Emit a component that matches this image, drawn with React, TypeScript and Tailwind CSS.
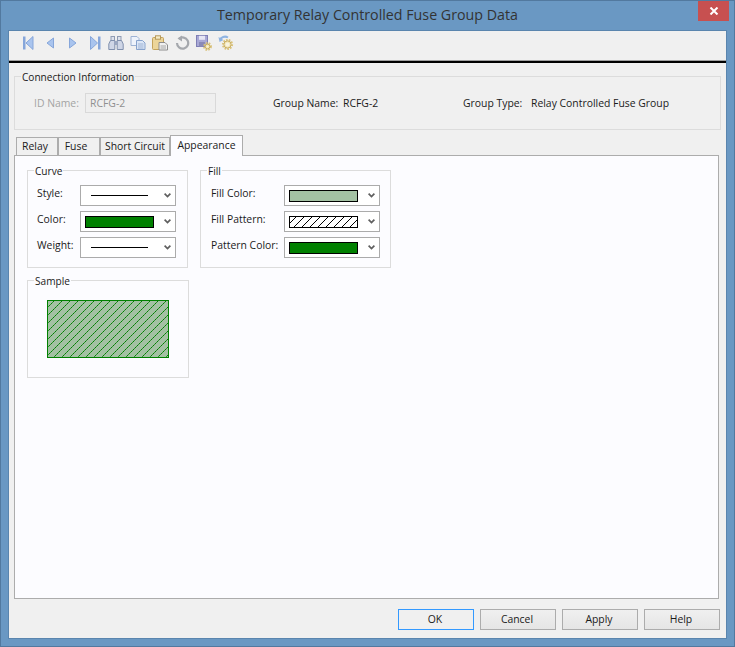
import React from "react";

const FONT = "font-['Open_Sans','Noto_Sans',sans-serif]";
const DIAG = [0, 1, 2, 3, 4, 5, 6, 7];

function Group({ title, className, children }: { title: string; className: string; children?: React.ReactNode }) {
  return (
    <div className={`relative border border-[#dcdcdc] ${className}`}>
      <span className="absolute left-[6px] top-[-7px] bg-inherit px-[1px] text-[10.1px] leading-[15px] text-[#1a1a1a]">{title}</span>
      {children}
    </div>
  );
}

function Chevron() {
  return (
    <svg width="7" height="5" viewBox="0 0 7 5" className="absolute right-[4px] top-[7px]">
      <path d="M0.6 0.6 L3.5 3.6 L6.4 0.6" fill="none" stroke="#5f5f5f" strokeWidth="1.7" />
    </svg>
  );
}

function HatchPattern({ id, bg, fg, soft }: { id: string; bg: string; fg: string; soft: string }) {
  return (
    <pattern id={id} width="8" height="8" patternUnits="userSpaceOnUse">
      <rect width="8" height="8" fill={bg} />
      {DIAG.map((i) => (
        <rect key={i} x={i} y={7 - i} width="1" height="1" fill={i % 2 === 0 ? fg : soft} />
      ))}
    </pattern>
  );
}

function HatchSwatch() {
  return (
    <svg width="69" height="12" viewBox="0 0 69 12" className="block" shapeRendering="crispEdges">
      <defs>
        <HatchPattern id="swatchHatch" bg="#ffffff" fg="#000000" soft="#000000" />
      </defs>
      <rect x="0.5" y="0.5" width="68" height="11" fill="url(#swatchHatch)" stroke="#000" />
    </svg>
  );
}

function Combo({ kind, color }: { kind: "line" | "swatch" | "hatch"; color?: string }) {
  return (
    <div className="relative flex h-[21px] w-[96px] items-center border border-[#ababab] bg-white pl-[4px]">
      {kind === "line" && <div className="ml-[6px] h-px w-[57px] bg-black" />}
      {kind === "swatch" && <div className="h-[12px] w-[69px] border border-black" style={{ backgroundColor: color }} />}
      {kind === "hatch" && <HatchSwatch />}
      <Chevron />
    </div>
  );
}

function Row({ label, labelW, children }: { label: string; labelW: string; children: React.ReactNode }) {
  return (
    <div className="flex items-start">
      <span className={`${labelW} pt-[1px] text-[10.4px] leading-[15px] text-[#1a1a1a]`}>{label}</span>
      {children}
    </div>
  );
}

function Tab({ label, active, w, extra = "" }: { label: string; active?: boolean; w: string; extra?: string }) {
  return active ? (
    <div className={`relative z-10 mb-[-1px] flex h-[21px] ${w} items-center justify-center border border-b-0 border-[#acacac] bg-[#fcfcff] pb-[1px] text-[10.4px]`}>{label}</div>
  ) : (
    <div className={`flex h-[18px] ${w} ${extra} items-center justify-center border border-b-0 border-[#acacac] bg-[#f0f0f0] pt-[1px] text-[10.4px]`}>{label}</div>
  );
}

function Btn({ label, def }: { label: string; def?: boolean }) {
  return (
    <button className={`h-[21px] w-[76px] border pr-[2px] text-[10.4px] leading-none text-[#1a1a1a] ${def ? "border-[#3399ff] bg-[#f0f0f0]" : "border-[#acacac] bg-gradient-to-b from-[#f0f0f0] to-[#e5e5e5]"}`}>
      {label}
    </button>
  );
}

const blue = "#a9c4ee";
const blueD = "#86a6da";

function Icon({ children }: { children: React.ReactNode }) {
  return (
    <div className="flex h-[22px] w-[22px] items-center justify-center">
      <svg width="16" height="16" viewBox="0 0 16 16">{children}</svg>
    </div>
  );
}

function Gear({ cx, cy, r }: { cx: number; cy: number; r: number }) {
  return (
    <g>
      <circle cx={cx} cy={cy} r={r} fill="none" stroke="#d9c27a" strokeWidth="2" strokeDasharray="1.6 1.2" />
      <circle cx={cx} cy={cy} r={r - 1} fill="#f3e6b5" stroke="#c9ae62" strokeWidth="1" />
      <circle cx={cx} cy={cy} r={r - 2.6 > 0.5 ? r - 2.6 : 0.8} fill="#f7f3e2" />
    </g>
  );
}

function Toolbar() {
  return (
    <div className="flex h-[29px] items-center bg-[#f0f0f0] pb-[6px] pl-[8px]">
      <Icon>
        <rect x="3" y="1.5" width="2.5" height="13" fill={blueD} />
        <path d="M13 1.5 V14.5 L6 8 Z" fill={blue} stroke={blueD} />
      </Icon>
      <Icon>
        <path d="M11.5 3 V13 L5 8 Z" fill={blue} stroke={blueD} />
      </Icon>
      <Icon>
        <path d="M5.5 3 V13 L12 8 Z" fill={blue} stroke={blueD} />
      </Icon>
      <Icon>
        <path d="M4.5 1.5 V14.5 L11.5 8 Z" fill={blue} stroke={blueD} />
        <rect x="12" y="1.5" width="2.5" height="13" fill={blueD} />
      </Icon>
      <Icon>
        <rect x="3" y="1.5" width="3.5" height="4" fill="#dfe3ec" stroke="#8f9bb3" />
        <rect x="9.5" y="1.5" width="3.5" height="4" fill="#dfe3ec" stroke="#8f9bb3" />
        <path d="M2.5 5.5 H6.8 V14.5 H0.8 V9 Z" fill="#cfd6e6" stroke="#8090ad" />
        <path d="M9.2 5.5 H13.5 L15.2 9 V14.5 H9.2 Z" fill="#cfd6e6" stroke="#8090ad" />
        <rect x="6.8" y="6" width="2.4" height="4" fill="#9aa7c0" />
      </Icon>
      <Icon>
        <path d="M1 1.5 H7 L9 3.5 V10.5 H1 Z" fill="#eef3fb" stroke="#9db2d4" />
        <path d="M6.5 5.5 H12.5 L15 8 V14.5 H6.5 Z" fill="#dbe6f6" stroke="#88a3cc" />
        <path d="M8 9 H13.5 M8 11 H13.5 M8 13 H13.5" stroke="#9db2d4" />
      </Icon>
      <Icon>
        <rect x="0.5" y="2.5" width="11" height="12" rx="1" fill="#ecd59a" stroke="#c4a35c" />
        <rect x="3.5" y="0.8" width="5" height="3.4" fill="#f6ecc8" stroke="#b69a5c" />
        <path d="M7 7.5 H13 L15.5 10 V15 H7 Z" fill="#f1f1f1" stroke="#8d8d8d" />
        <path d="M8.5 11 H14 M8.5 13 H14" stroke="#a5a5a5" />
      </Icon>
      <Icon>
        <path d="M5 3.8 A5.6 5.6 0 1 1 3 8" fill="none" stroke="#a5a8ad" strokeWidth="2.2" />
        <path d="M8 0.5 V6.5 L3.5 3.5 Z" fill="#a5a8ad" />
      </Icon>
      <Icon>
        <rect x="0.5" y="0.5" width="11" height="11" fill="#a9a9d6" stroke="#7f7fb5" />
        <rect x="3" y="0.8" width="6" height="4" fill="#e6e6f4" />
        <rect x="3" y="7" width="6" height="4.5" fill="#8a8ab8" />
        <Gear cx={11.5} cy={11.5} r={3.4} />
      </Icon>
      <Icon>
        <path d="M2 5 A5 4 0 0 1 10 2.5" fill="none" stroke="#8fb4e2" strokeWidth="2" />
        <path d="M0.5 2 L1.5 7 L5.5 5 Z" fill="#8fb4e2" />
        <Gear cx={9.5} cy={9.5} r={4.6} />
      </Icon>
    </div>
  );
}

export default function App() {
  return (
    <div className={`flex h-[647px] w-[735px] flex-col overflow-hidden border border-[#52799f] bg-[#6a98c3] ${FONT} text-[#1a1a1a]`}>
      <div className="flex h-[29px] shrink-0 items-start">
        <div className="w-[36px]" />
        <div className="flex-1 pt-[4px] text-center text-[14.25px] leading-[20px] text-[#333333]">Temporary Relay Controlled Fuse Group Data</div>
        <div className="mr-[5px] flex h-[20px] w-[31px] items-center justify-center bg-[#c75050]">
          <svg width="10" height="8" viewBox="0 0 10 8">
            <path d="M1.5 0.5 L8.5 7.5 M8.5 0.5 L1.5 7.5" stroke="#fff" strokeWidth="2" />
          </svg>
        </div>
      </div>

      <div className="mx-[7px] mb-[7px] flex flex-1 flex-col border border-[#5a85ae] bg-[#f0f0f0]">
        <Toolbar />
        <div className="h-[3px] border-t border-t-[#a0a0a0] bg-black" />

        <div className="flex flex-1 flex-col px-[5px] pt-[13px]">
          <Group title="Connection Information" className="h-[54px] w-[707px] bg-[#f0f0f0]">
            <div className="flex items-center pt-[16px] text-[10.4px] leading-[15px]">
              <span className="ml-[19px] w-[51px] text-[#a3a3a3]">ID Name:</span>
              <div className="flex h-[20px] w-[131px] items-center border border-[#d9d9d9] bg-[#efefef] pl-[4px] text-[#8f8f8f]">RCFG-2</div>
              <span className="ml-[57px] w-[70px]">Group Name:</span>
              <span className="w-[120px]">RCFG-2</span>
              <span className="w-[68px]">Group Type:</span>
              <span>Relay Controlled Fuse Group</span>
            </div>
          </Group>

          <div className="mt-[5px] flex items-end pl-[2px]">
            <Tab label="Relay" w="w-[42px]" extra="pr-[4px]" />
            <Tab label="Fuse" w="w-[42px]" extra="pr-[6px]" />
            <Tab label="Short Circuit" w="w-[70px]" />
            <Tab label="Appearance" w="w-[73px]" active />
          </div>

          <div className="h-[444px] w-[705px] border border-[#acacac] bg-[#fcfcff] pl-[12px] pt-[14px]">
            <div className="flex gap-[12px]">
              <Group title="Curve" className="h-[98px] w-[161px] bg-[#fcfcff]">
                <div className="flex flex-col gap-[5px] pl-[9px] pt-[14px]">
                  <Row label="Style:" labelW="w-[43px]"><Combo kind="line" /></Row>
                  <Row label="Color:" labelW="w-[43px]"><Combo kind="swatch" color="#008000" /></Row>
                  <Row label="Weight:" labelW="w-[43px]"><Combo kind="line" /></Row>
                </div>
              </Group>
              <Group title="Fill" className="h-[98px] w-[191px] bg-[#fcfcff]">
                <div className="flex flex-col gap-[5px] pl-[10px] pt-[14px]">
                  <Row label="Fill Color:" labelW="w-[73px]"><Combo kind="swatch" color="#a3c1a3" /></Row>
                  <Row label="Fill Pattern:" labelW="w-[73px]"><Combo kind="hatch" /></Row>
                  <Row label="Pattern Color:" labelW="w-[73px]"><Combo kind="swatch" color="#008000" /></Row>
                </div>
              </Group>
            </div>
            <Group title="Sample" className="mt-[12px] h-[98px] w-[162px] bg-[#fcfcff]">
              <div className="pl-[19px] pt-[19px]">
                <svg width="122" height="58" viewBox="0 0 122 58" className="block" shapeRendering="crispEdges">
                  <defs>
                    <HatchPattern id="sampleHatch" bg="#a3c1a3" fg="#008000" soft="#2f8f2f" />
                  </defs>
                  <rect x="0.5" y="0.5" width="121" height="57" fill="url(#sampleHatch)" stroke="#008000" />
                </svg>
              </div>
            </Group>
          </div>

          <div className="mt-[10px] flex justify-end gap-[6px] pr-[1px]">
            <Btn label="OK" def />
            <Btn label="Cancel" />
            <Btn label="Apply" />
            <Btn label="Help" />
          </div>
        </div>
      </div>
    </div>
  );
}
